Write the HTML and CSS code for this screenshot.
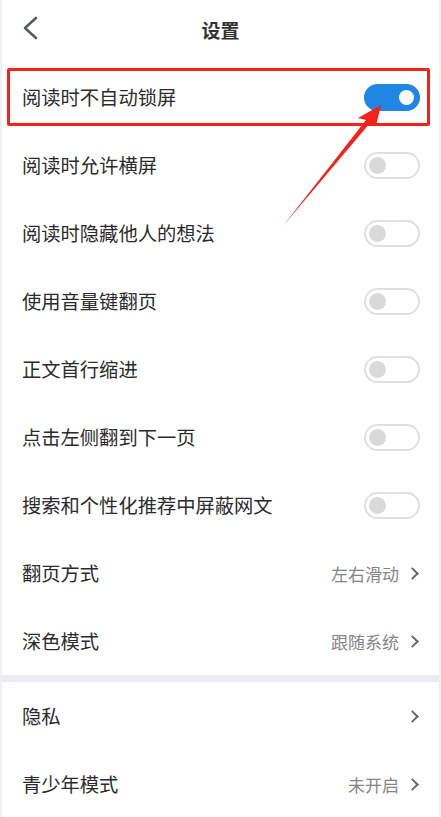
FILE: index.html
```html
<!DOCTYPE html>
<html lang="zh-CN">
<head>
  <meta charset="UTF-8">
  <meta name="viewport" content="width=device-width, initial-scale=1.0">
  <title>设置</title>
  <link rel="stylesheet" href="styles.css">
</head>
<body>

<div class="page">
  <div class="header">
    <svg class="back" width="20" height="28" viewBox="0 0 20 28">
      <polyline points="15,4 4,14 15,24" fill="none" stroke="#565b62" stroke-width="2.6" stroke-linecap="round" stroke-linejoin="round"/>
    </svg>
    <h1>设置</h1>
  </div>

  <div class="group">
    <div class="row"><span class="label">阅读时不自动锁屏</span><span class="switch on"></span></div>
    <div class="row"><span class="label">阅读时允许横屏</span><span class="switch"></span></div>
    <div class="row"><span class="label">阅读时隐藏他人的想法</span><span class="switch"></span></div>
    <div class="row"><span class="label">使用音量键翻页</span><span class="switch"></span></div>
    <div class="row"><span class="label">正文首行缩进</span><span class="switch"></span></div>
    <div class="row"><span class="label">点击左侧翻到下一页</span><span class="switch"></span></div>
    <div class="row"><span class="label">搜索和个性化推荐中屏蔽网文</span><span class="switch"></span></div>
    <div class="row"><span class="label">翻页方式</span><span class="value">左右滑动<i class="arrow"></i></span></div>
    <div class="row"><span class="label">深色模式</span><span class="value">跟随系统<i class="arrow"></i></span></div>
  </div>

  <div class="divider"></div>

  <div class="group">
    <div class="row"><span class="label">隐私</span><span class="value"><i class="arrow"></i></span></div>
    <div class="row"><span class="label">青少年模式</span><span class="value">未开启<i class="arrow"></i></span></div>
  </div>

  <!-- annotation drawn over the screenshot -->
  <div class="mark-box"></div>
  <svg class="mark-arrow" width="441" height="260" viewBox="0 0 441 260">
    <polygon points="381,105 358,118 366,120 283,226 370,123 376,126" fill="#f5221b"/>
  </svg>
</div>

</body>
</html>
```

FILE: styles.css
```css
body {
  margin: 0;
  padding: 0;
  background-color: #fff;
  font-family: "Noto Sans CJK SC", "Noto Sans", sans-serif;
}

.page {
  position: relative;
  width: 441px;
  height: 817px;
  box-sizing: border-box;
  border-left: 2px solid #f0f0f2;
  border-right: 2px solid #f0f0f2;
  overflow: hidden;
}

.header {
  height: 63px;
  display: flex;
  align-items: center;
  justify-content: center;
  position: relative;
}

.header .back {
  position: absolute;
  left: 19px;
  top: 14px;
}

.header h1 {
  margin: 0;
  margin-top: -4px;
  font-size: 19px;
  font-weight: bold;
  color: #333;
}

.row {
  height: 68px;
  display: flex;
  align-items: center;
  justify-content: space-between;
  padding: 0 19px 0 20px;
}

.label {
  font-size: 19.3px;
  color: #2b2b2b;
}

.switch {
  position: relative;
  width: 52px;
  height: 23px;
  border: 2px solid #e0e0e0;
  border-radius: 14px;
  background-color: #fff;
}

.switch::after {
  content: "";
  position: absolute;
  left: 3px;
  top: 3px;
  width: 17px;
  height: 17px;
  border-radius: 50%;
  background-color: #d9d9d9;
}

.switch.on {
  background-color: #1f86e4;
  border-color: #1f86e4;
}

.switch.on::after {
  left: auto;
  right: 4px;
  top: 4px;
  width: 15px;
  height: 15px;
  background-color: #fff;
}

.value {
  display: flex;
  align-items: center;
  font-size: 17px;
  color: #858585;
}

.arrow {
  display: inline-block;
  width: 7px;
  height: 7px;
  margin-left: 9px;
  margin-right: 3px;
  border-top: 2px solid #6a6a6a;
  border-right: 2px solid #6a6a6a;
  transform: rotate(45deg);
}

.divider {
  height: 7px;
  background-color: #ebecef;
}

.mark-box {
  position: absolute;
  left: 5px;
  top: 68px;
  width: 417px;
  height: 52px;
  border: 3px solid #f5221b;
  border-radius: 2px;
}

.mark-arrow {
  position: absolute;
  left: -2px;
  top: 0;
}
```
